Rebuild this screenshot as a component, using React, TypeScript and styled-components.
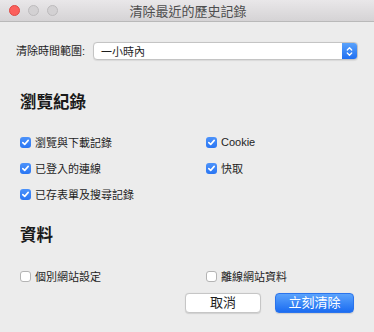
import styled, { createGlobalStyle } from "styled-components";

const GlobalStyle = createGlobalStyle`
  html, body {
    margin: 0;
    padding: 0;
    background: #ececec;
  }
  body {
    font-family: "Liberation Sans", "Noto Sans CJK TC", sans-serif;
    -webkit-font-smoothing: antialiased;
  }
`

const Window = styled.div`
  width: 374px;
  height: 332px;
  background: #ececec;
  display: flex;
  flex-direction: column;
  overflow: hidden;
`

const TitleBar = styled.div`
  height: 21px;
  flex: none;
  display: flex;
  align-items: center;
  position: relative;
  background: linear-gradient(#e9e7e9, #d5d3d5);
  border-bottom: 1px solid #b9b9b9;
  padding-left: 9px;
  gap: 8px;
`

const Light = styled.span<{ $color: string; $border: string }>`
  width: 11px;
  height: 11px;
  border-radius: 50%;
  background: ${(p) => p.$color};
  border: 0.5px solid ${(p) => p.$border};
  box-sizing: border-box;
`

const Title = styled.div`
  position: absolute;
  left: 0;
  right: 0;
  top: 0;
  bottom: 0;
  display: flex;
  align-items: center;
  justify-content: center;
  padding-left: 2px;
  font-size: 13px;
  color: #4d4d4d;
  pointer-events: none;
`

const Body = styled.div`
  flex: 1;
  display: flex;
  flex-direction: column;
  padding: 20px 16px 0 20px;
`

const RangeRow = styled.div`
  display: flex;
  align-items: center;
  gap: 8px;
  margin-left: -4px;
  height: 18px;
`

const Label = styled.span`
  font-size: 11px;
  line-height: 14px;
  color: #1e1e1e;
`

const Select = styled.div`
  flex: 1;
  height: 18px;
  box-sizing: border-box;
  display: flex;
  align-items: stretch;
  background: #fff;
  border: 1px solid #c4c4c4;
  border-radius: 4px;
  box-shadow: 0 0.5px 1px rgba(0, 0, 0, 0.08);
  overflow: hidden;
`

const SelectValue = styled.span`
  flex: 1;
  display: flex;
  align-items: center;
  padding-left: 7px;
  font-size: 11px;
  color: #1e1e1e;
`

const Stepper = styled.span`
  width: 15px;
  display: flex;
  align-items: center;
  justify-content: center;
  background: linear-gradient(#5aa2fb, #1f6ff2);
`

const Heading = styled.h2<{ $top: number }>`
  margin: ${(p) => p.$top}px 0 0;
  font-size: 16.5px;
  line-height: 20px;
  font-weight: 700;
  color: #1a1a1a;
`

const Grid = styled.div<{ $top: number }>`
  margin-top: ${(p) => p.$top}px;
  display: grid;
  grid-template-columns: 186px 1fr;
  grid-auto-rows: 26px;
`

const Option = styled.label`
  display: flex;
  align-items: center;
  gap: 4px;
  font-size: 11px;
  color: #1e1e1e;
`

const Box = styled.span<{ $checked: boolean }>`
  width: 11px;
  height: 11px;
  box-sizing: border-box;
  border-radius: 3px;
  display: flex;
  align-items: center;
  justify-content: center;
  background: ${(p) => (p.$checked ? "linear-gradient(#4c92fa, #2a76f3)" : "#fff")};
  border: ${(p) => (p.$checked ? "none" : "1px solid #b4b4b4")};
`

const Buttons = styled.div`
  display: flex;
  justify-content: flex-end;
  gap: 14px;
  margin-top: 4px;
  padding-right: 4px;
`

const Button = styled.button<{ $primary?: boolean }>`
  height: 20px;
  width: ${(p) => (p.$primary ? 79 : 76)}px;
  box-sizing: border-box;
  border-radius: 4px;
  font-family: inherit;
  font-size: 13px;
  line-height: 18px;
  padding: 0;
  color: ${(p) => (p.$primary ? "#fff" : "#1e1e1e")};
  background: ${(p) => (p.$primary ? "linear-gradient(#5ba3fc, #1b6cf1)" : "#fff")};
  border: 1px solid ${(p) => (p.$primary ? "#2b74ec" : "#c6c6c6")};
  box-shadow: 0 0.5px 1px rgba(0, 0, 0, 0.12);
`

const Check = () => (
  <svg width="9" height="9" viewBox="0 0 9 9">
    <path d="M1.8 4.6 L3.7 6.4 L7.2 2.4" fill="none" stroke="#fff" strokeWidth="1.6" strokeLinecap="round" strokeLinejoin="round" />
  </svg>
)

const Chevrons = () => (
  <svg width="7" height="11" viewBox="0 0 7 11">
    <path d="M1.3 4 L3.5 1.8 L5.7 4 M1.3 7 L3.5 9.2 L5.7 7" fill="none" stroke="#fff" strokeWidth="1.3" strokeLinecap="round" strokeLinejoin="round" />
  </svg>
)

const CheckOption = ({ label, checked }: { label: string; checked: boolean }) => (
  <Option>
    <Box $checked={checked}>{checked && <Check />}</Box>
    {label}
  </Option>
)

const App = () => {
  return (
    <Window>
      <GlobalStyle />
      <TitleBar>
        <Light $color="#fc605c" $border="#de4a45" />
        <Light $color="#d3d1d3" $border="#bdbbbd" />
        <Light $color="#d3d1d3" $border="#bdbbbd" />
        <Title>清除最近的歷史記錄</Title>
      </TitleBar>
      <Body>
        <RangeRow>
          <Label>清除時間範圍:</Label>
          <Select>
            <SelectValue>一小時內</SelectValue>
            <Stepper><Chevrons /></Stepper>
          </Select>
        </RangeRow>

        <Heading $top={32}>瀏覽紀錄</Heading>
        <Grid $top={17}>
          <CheckOption label="瀏覽與下載記錄" checked />
          <CheckOption label="Cookie" checked />
          <CheckOption label="已登入的連線" checked />
          <CheckOption label="快取" checked />
          <CheckOption label="已存表單及搜尋記錄" checked />
        </Grid>

        <Heading $top={18}>資料</Heading>
        <Grid $top={18}>
          <CheckOption label="個別網站設定" checked={false} />
          <CheckOption label="離線網站資料" checked={false} />
        </Grid>

        <Buttons>
          <Button>取消</Button>
          <Button $primary>立刻清除</Button>
        </Buttons>
      </Body>
    </Window>
  )
}

export default App
